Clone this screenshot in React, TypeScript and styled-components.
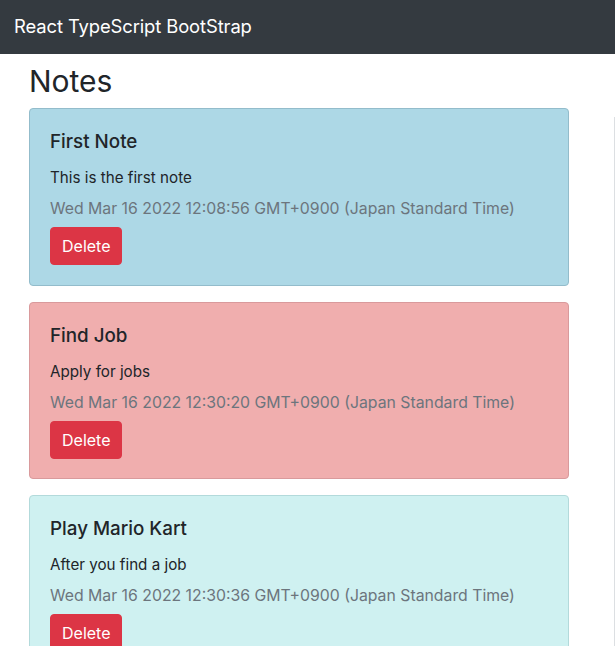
import React from "react";
import styled, { createGlobalStyle } from "styled-components";

const Global = createGlobalStyle`
  html, body { margin: 0; padding: 0; background: #fff; overflow: hidden; }
  body {
    font-family: "Inter", "Liberation Sans", "Noto Sans", sans-serif;
    color: #212529;
    font-size: 16px;
    line-height: 1.5;
  }
`;

const NavBar = styled.header`
  height: 54px;
  background: #343a40;
  display: flex;
  align-items: center;
  padding: 0 14px;
`;

const Brand = styled.span`
  color: #fff;
  font-size: 18.4px;
  letter-spacing: -0.1px;
`;

const Page = styled.main`
  display: flex;
  gap: 45px;
  padding-left: 29px;
`;

const NotesCol = styled.section`
  width: 540px;
  flex-shrink: 0;
`;

const Heading = styled.h1`
  margin: 7px 0 7px;
  font-size: 30px;
  font-weight: 400;
  line-height: 40px;
`;

const SidePanel = styled.aside`
  flex: 1;
  margin-top: 63px;
  border-left: 1px solid #dcdfe2;
  height: 600px;
`;

const Card = styled.article<{ $bg: string; $border: string }>`
  background: ${(p) => p.$bg};
  border: 1px solid ${(p) => p.$border};
  border-radius: 4px;
  padding: 20px 20px 19.6px;
  margin-bottom: 16px;
  display: flex;
  flex-direction: column;
  align-items: flex-start;
`;

const Title = styled.h5`
  margin: 1px 0 12px;
  font-size: 18.8px;
  font-weight: 500;
  line-height: 24px;
`;

const Text = styled.p`
  margin: 0 0 7px;
  font-size: 15.2px;
  line-height: 24px;
`;

const DateLine = styled.div`
  color: #6c757d;
  font-size: 15.8px;
  line-height: 24px;
  margin-bottom: 6px;
`;

const DeleteButton = styled.button`
  background: #dc3545;
  border: 1px solid #dc3545;
  color: #fff;
  border-radius: 4px;
  font-family: inherit;
  font-size: 16px;
  line-height: 24px;
  padding: 6px 11px;
  width: 72px;
  cursor: pointer;
`;

type Note = { title: string; text: string; date: string; bg: string; border: string };

const notes: Note[] = [
  {
    title: "First Note",
    text: "This is the first note",
    date: "Wed Mar 16 2022 12:08:56 GMT+0900 (Japan Standard Time)",
    bg: "#add8e6",
    border: "#93bccb",
  },
  {
    title: "Find Job",
    text: "Apply for jobs",
    date: "Wed Mar 16 2022 12:30:20 GMT+0900 (Japan Standard Time)",
    bg: "#f0aeae",
    border: "#d99a9c",
  },
  {
    title: "Play Mario Kart",
    text: "After you find a job",
    date: "Wed Mar 16 2022 12:30:36 GMT+0900 (Japan Standard Time)",
    bg: "#cff1f1",
    border: "#b3dadb",
  },
];

export default function App() {
  return (
    <>
      <Global />
      <NavBar>
        <Brand>React TypeScript BootStrap</Brand>
      </NavBar>
      <Page>
        <NotesCol>
          <Heading>Notes</Heading>
          {notes.map((n) => (
            <Card key={n.title} $bg={n.bg} $border={n.border}>
              <Title>{n.title}</Title>
              <Text>{n.text}</Text>
              <DateLine>{n.date}</DateLine>
              <DeleteButton>Delete</DeleteButton>
            </Card>
          ))}
        </NotesCol>
        <SidePanel />
      </Page>
    </>
  );
}
